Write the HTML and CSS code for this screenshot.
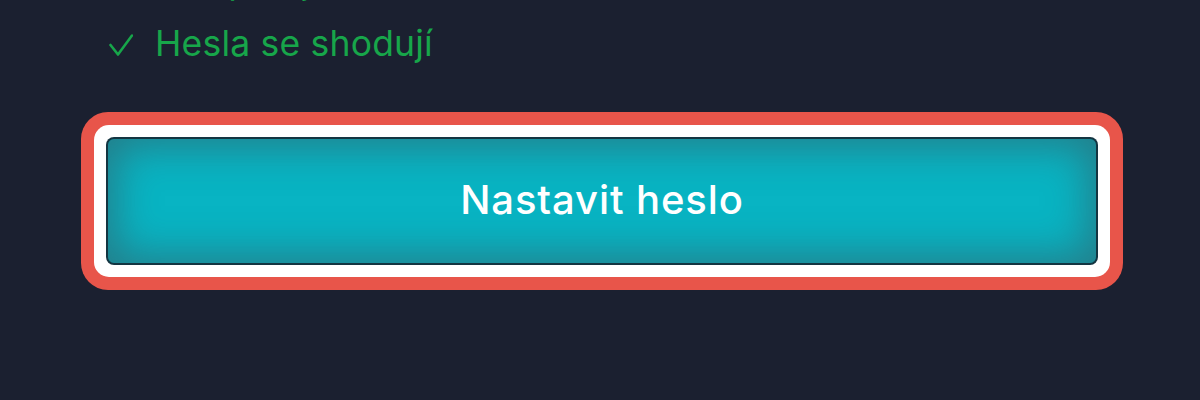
FILE: index.html
```html
<!DOCTYPE html>
<html lang="cs">
<head>
<meta charset="utf-8">
<title>Nastavit heslo</title>
<link rel="stylesheet" href="styles.css">
</head>
<body>
<main class="page">
  <ul class="checks">
    <li class="check-item">
      <svg class="check-icon" viewBox="0 0 24 22" aria-hidden="true"><path d="M1.5 11 L9 20.5 L23 1.5" /></svg>
      <span>Alespoň jedno číslo</span>
    </li>
    <li class="check-item">
      <svg class="check-icon" viewBox="0 0 24 22" aria-hidden="true"><path d="M1.5 11 L9 20.5 L23 1.5" /></svg>
      <span>Hesla se shodují</span>
    </li>
  </ul>
  <div class="ring-outer">
    <div class="ring-inner">
      <button class="submit" type="button">Nastavit heslo</button>
    </div>
  </div>
</main>
</body>
</html>
```

FILE: styles.css
```css
html, body {
  margin: 0;
  padding: 0;
  background: #1b2030;
  height: 100%;
  overflow: hidden;
}

.page {
  font-family: "Inter", "Noto Sans", sans-serif;
  padding-left: 81px;
  width: 1042px;
}

.checks {
  list-style: none;
  margin: -40px 0 0 0;
  padding: 0 0 0 28px;
  display: flex;
  flex-direction: column;
  gap: 18px;
}

.check-item {
  display: flex;
  align-items: center;
  height: 44px;
  font-size: 35.5px;
  line-height: 44px;
  color: #17a64a;
  letter-spacing: 0.2px;
}

.check-icon {
  width: 24px;
  height: 22px;
  margin-right: 22px;
  margin-top: 2px;
  fill: none;
  stroke: #17a64a;
  stroke-width: 2.6;
  stroke-linecap: round;
  stroke-linejoin: round;
}

.ring-outer {
  margin-top: 46px;
  background: #e8554a;
  border-radius: 27px;
  padding: 13px;
}

.ring-inner {
  background: #ffffff;
  border-radius: 15px;
  padding: 12px;
}

.submit {
  display: flex;
  align-items: center;
  justify-content: center;
  width: 100%;
  height: 128px;
  margin: 0;
  padding: 0 0 4px 0;
  border: 2px solid rgba(22, 30, 42, 0.85);
  border-radius: 8px;
  background: #08b4c3;
  box-shadow: inset 0 0 40px 8px rgba(60, 80, 90, 0.55);
  color: #ffffff;
  font-family: "Inter", "Noto Sans", sans-serif;
  font-size: 40px;
  font-weight: 500;
  letter-spacing: 0.9px;
  cursor: pointer;
}
```
